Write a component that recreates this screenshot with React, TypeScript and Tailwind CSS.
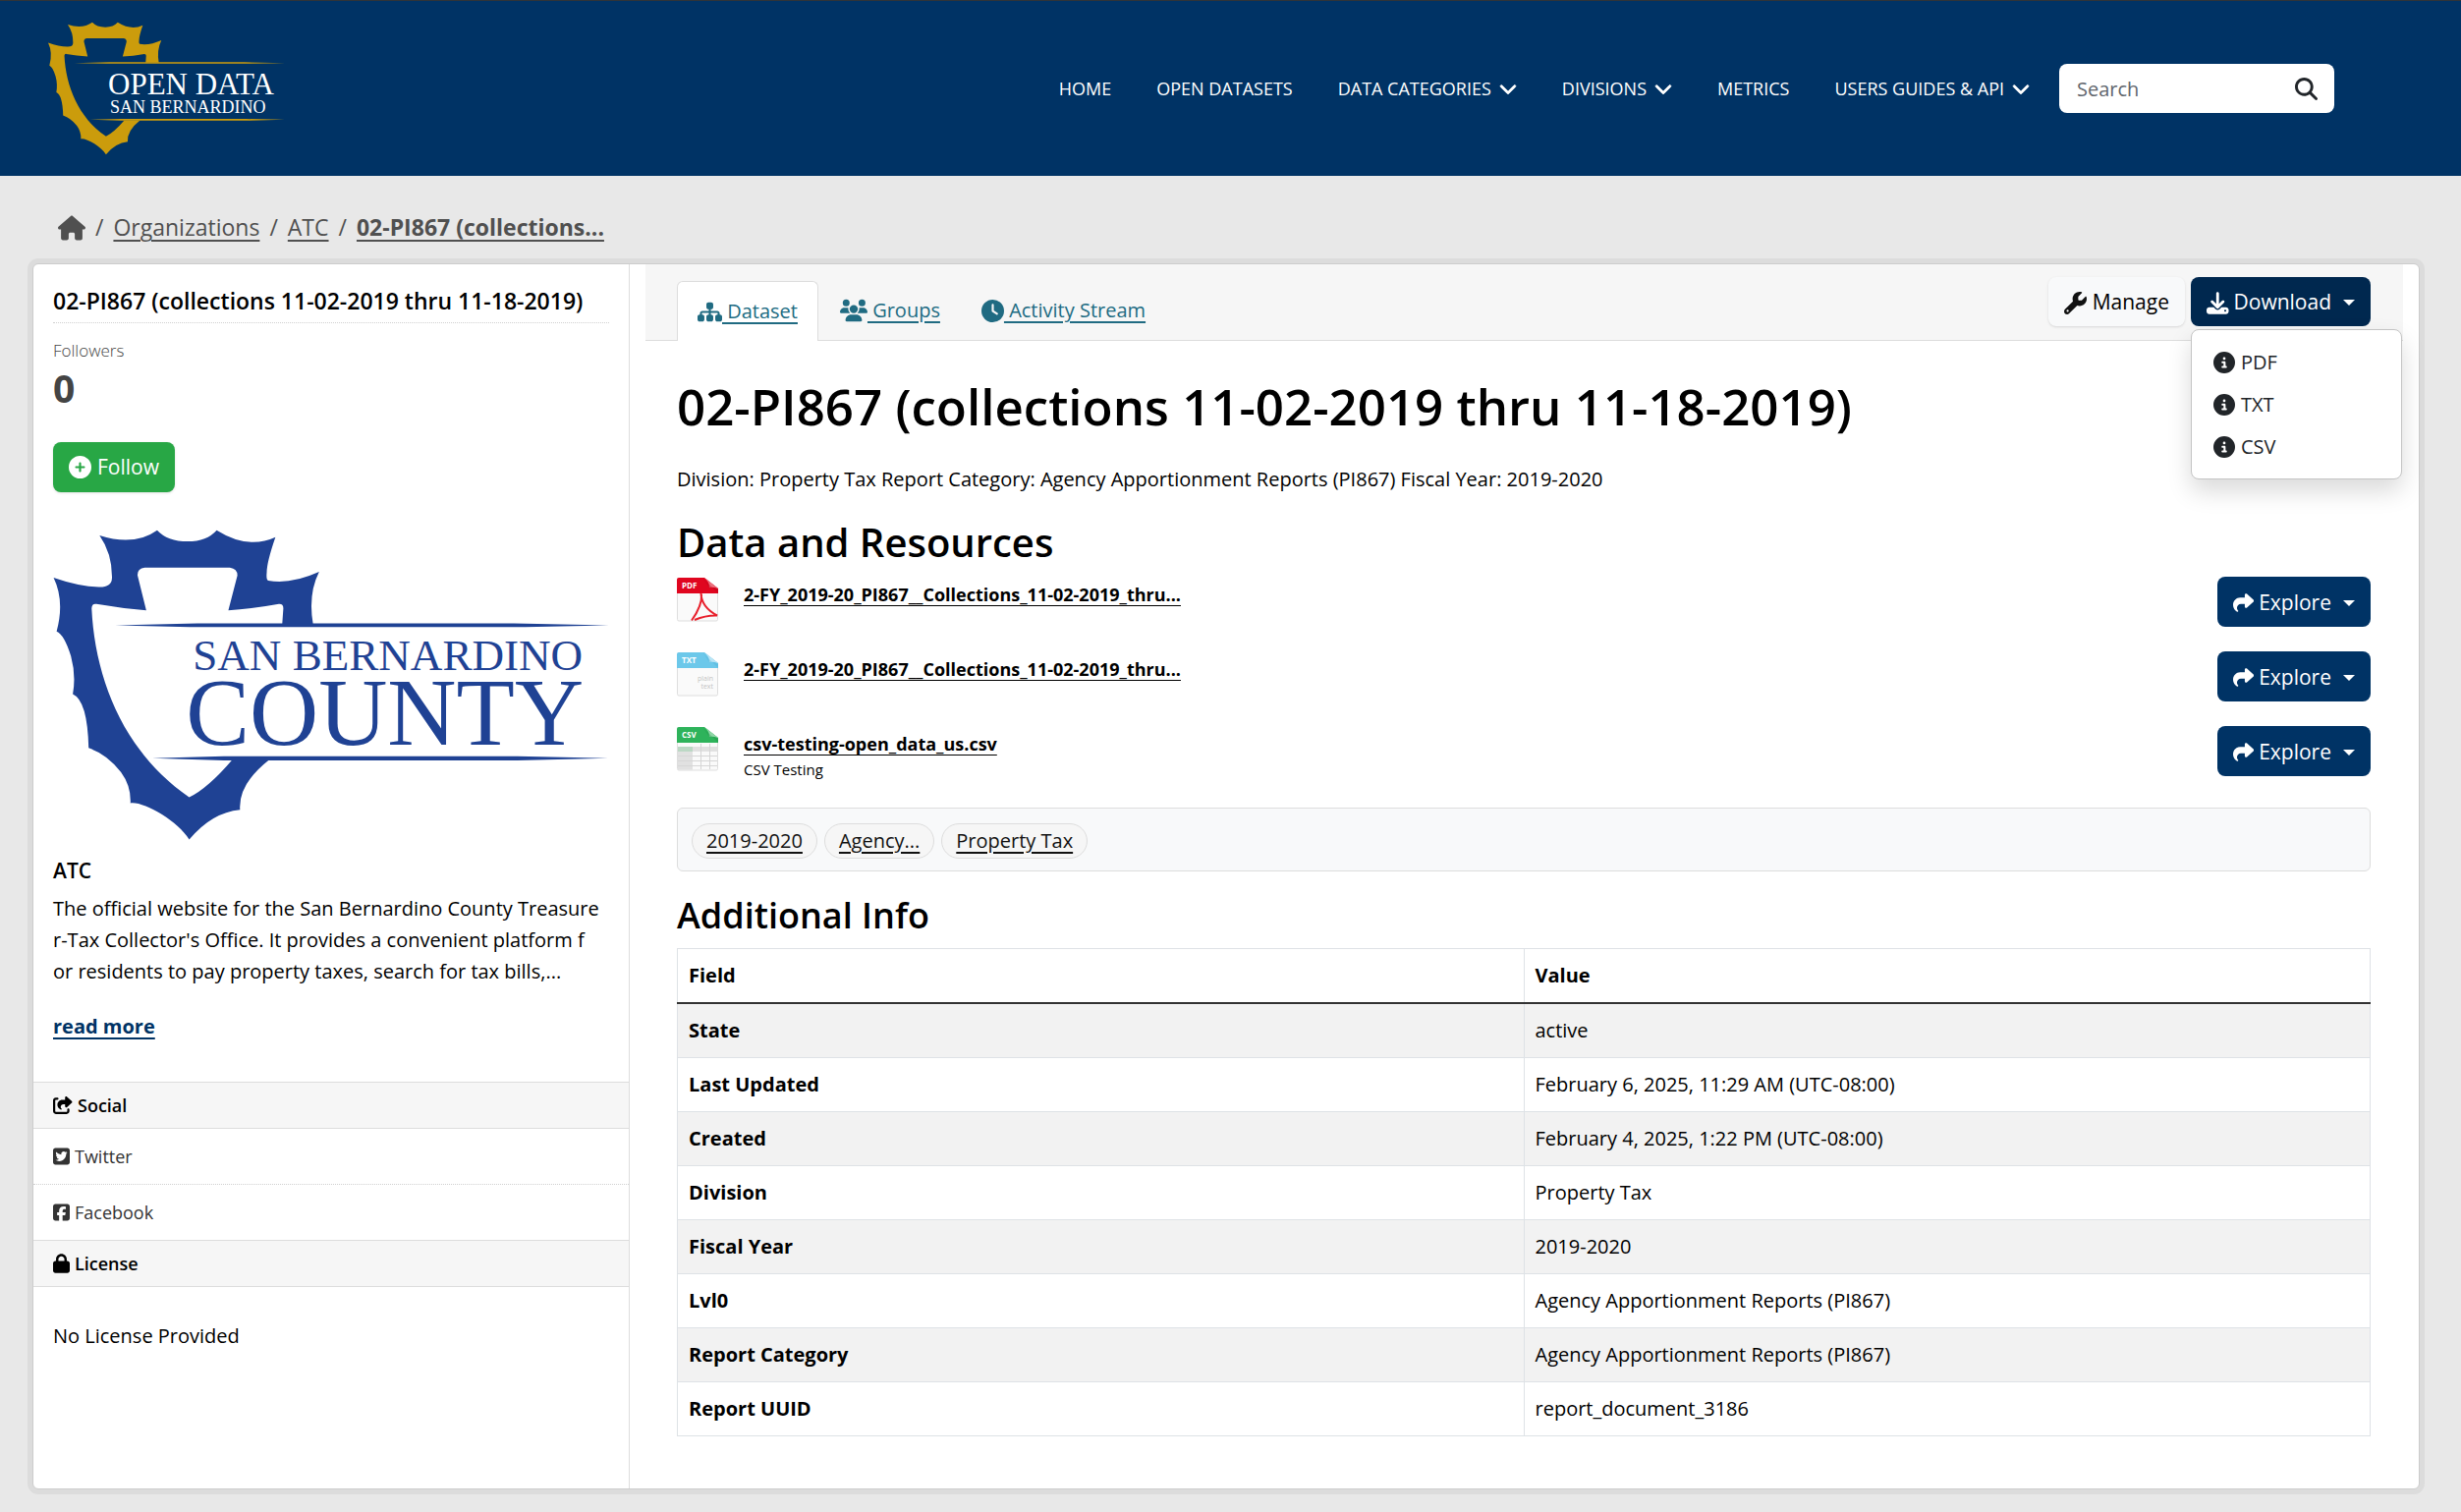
import React, { useState } from 'react';
import {
    FaChevronDown,
    FaCircleInfo,
    FaCirclePlus,
    FaClock,
    FaDownload,
    FaHouse,
    FaLock,
    FaMagnifyingGlass,
    FaShare,
    FaShareFromSquare,
    FaSitemap,
    FaSquareFacebook,
    FaSquareTwitter,
    FaUsers,
    FaWrench
} from 'react-icons/fa6';

const navItems = [
    { label: 'HOME', menu: false },
    { label: 'OPEN DATASETS', menu: false },
    { label: 'DATA CATEGORIES', menu: true },
    { label: 'DIVISIONS', menu: true },
    { label: 'METRICS', menu: false },
    { label: 'USERS GUIDES & API', menu: true }
];

type ResourceFormat = 'pdf' | 'txt' | 'csv';

interface Resource {
    name: string;
    format: ResourceFormat;
    description?: string;
}

const resources: Resource[] = [
    { name: '2-FY_2019-20_PI867__Collections_11-02-2019_thru...', format: 'pdf' },
    { name: '2-FY_2019-20_PI867__Collections_11-02-2019_thru...', format: 'txt' },
    { name: 'csv-testing-open_data_us.csv', format: 'csv', description: 'CSV Testing' }
];

const tags = ['2019-2020', 'Agency...', 'Property Tax'];

const additionalInfo = [
    ['State', 'active'],
    ['Last Updated', 'February 6, 2025, 11:29 AM (UTC-08:00)'],
    ['Created', 'February 4, 2025, 1:22 PM (UTC-08:00)'],
    ['Division', 'Property Tax'],
    ['Fiscal Year', '2019-2020'],
    ['Lvl0', 'Agency Apportionment Reports (PI867)'],
    ['Report Category', 'Agency Apportionment Reports (PI867)'],
    ['Report UUID', 'report_document_3186']
];

// Arrowhead outline and the two tapered rules, shared by both logos
function Arrowhead() {
    return (
        <>
            <path d="M727 349 Q713 258 743 189 Q668 228 608 216 Q602 214 604 190 Q604 160 627 83 Q555 122 471 62 Q445 96 394 96 Q340 96 313 62 Q252 112 160 78 Q194 134 193 208 Q192 236 158 235 Q105 234 38 207 Q68 278 46 371 Q66 380 84 446 Q98 505 89 562 Q128 582 131 726 Q180 745 217 800 Q244 842 242 894 C275 887 368 948 398 1005 Q458 922 533 914 Q528 836 610 762 L512 762 Q448 848 398 876 C225 740 148 515 139 300 Q140 284 152 287 Q215 300 284 306 L261 200 Q260 178 280 176 L506 176 Q526 179 526 200 L502 306 Q565 302 636 287 Q648 286 648 300 L645 349 Z" />
            <path d="M202 352 L420 346 H1260 L1512 352 L1290 357 H400 Z" />
            <path d="M300 757 L490 751 H1270 L1510 757 L1270 764 H490 Z" />
        </>
    );
}

function HeaderLogo() {
    return (
        <svg viewBox="0 0 244 136" className="h-[136px] w-[244px] shrink-0" role="img" aria-label="Open Data San Bernardino">
            <g fill="#cb9c0c" transform="translate(-6.2 -8) scale(.1635 .1425)">
                <Arrowhead />
            </g>
            <g fill="#ffffff" fontFamily="Liberation Serif, serif">
                <text x="61" y="74" fontSize="31">OPEN DATA</text>
                <text x="63" y="93" fontSize="18">SAN BERNARDINO</text>
            </g>
        </svg>
    );
}

function CountyLogo() {
    return (
        <svg viewBox="14 20 565 316" className="mt-[38px] w-full" role="img" aria-label="San Bernardino County">
            <g fill="#1f4294" transform="scale(.3827 .3333)">
                <Arrowhead />
            </g>
            <g fill="#1f4294" fontFamily="Liberation Serif, serif">
                <text x="156" y="163" fontSize="45">SAN BERNARDINO</text>
                <text x="149" y="239" fontSize="97">COUNTY</text>
            </g>
        </svg>
    );
}

const formatColors: Record<ResourceFormat, { band: string; fold: string; foldDark: string }> = {
    pdf: { band: '#e0061f', fold: '#ec6f7c', foldDark: '#b00418' },
    txt: { band: '#6cc8ea', fold: '#b9e5f6', foldDark: '#4aaed3' },
    csv: { band: '#2eb35b', fold: '#8ed6a6', foldDark: '#1f8f45' }
};

function FileIcon({ format }: { format: ResourceFormat }) {
    const colors = formatColors[format];
    return (
        <svg viewBox="0 0 42 45" className="mt-px h-[45px] w-[42px] shrink-0" aria-hidden="true">
            <path d="M.5 2 V42.500 Q.5 44 2 44 H40 Q41.500 44 41.500 42.500 V11 L28 .5 H2 Q.5 .5 .5 2 Z" fill="#fafafa" stroke="#dedede" />
            <path d="M0 16 V2 Q0 0 2 0 H28 L42 11 V16 Z" fill={colors.band} />
            <path d="M28 0 L42 11 Q36 9 33 10 Q33 4 28 0 Z" fill={colors.fold} />
            <path d="M27 1 L33 10 Q38 9 42 12 V16 Z" fill={colors.foldDark} opacity=".35" />
            <text x="5" y="11" fontSize="8" fontWeight="700" fill="#ffffff" fontFamily="Open Sans, sans-serif">
                {format.toUpperCase()}
            </text>
            {format === 'pdf' && (
                <path d="M24.500 16 Q25 30 41 38.500 Q30 38 18 43 M25 17 Q26 28 15 43.500" fill="none" stroke="#e8202c" strokeWidth="2" />
            )}
            {format === 'txt' && (
                <g fontSize="7" fill="#c4c4c4" textAnchor="end" fontFamily="Open Sans, sans-serif">
                    <text x="37" y="29">plain</text>
                    <text x="37" y="37">text</text>
                </g>
            )}
            {format === 'csv' && (
                <>
                    <path d="M1 20 H16 V43.500 H1 Z M16 20 H41 V25 H16 Z" fill="#e1e1e1" />
                    <path d="M1 20 H16 V25 H1 Z" fill="#bcd8c5" />
                    <path d="M1 29.500 H41 M1 34.500 H41 M1 39.500 H41 M24.500 17 V43 M33.500 17 V43" stroke="#d6d6d6" fill="none" />
                </>
            )}
        </svg>
    );
}

function Caret() {
    return <span className="ml-3 border-x-6 border-t-6 border-x-transparent border-t-white" />;
}

function SiteHeader() {
    return (
        <header className="flex items-center justify-between border-t border-[#303438] bg-[#003365] py-[21px] pr-[129px] pl-[49px]">
            <a href="#home"><HeaderLogo /></a>
            <div className="flex items-center">
                <nav className="flex items-center gap-[46px] text-lg text-white">
                    {navItems.map((item) => (
                        <a key={item.label} href="#nav" className="flex items-center gap-2 whitespace-nowrap">
                            {item.label}
                            {item.menu && <FaChevronDown className="size-[18px] stroke-white stroke-[24px]" />}
                        </a>
                    ))}
                </nav>
                <form className="ml-[30px] flex h-[50px] w-[280px] items-center rounded-lg bg-white pr-[17px] pl-[18px]" onSubmit={(e) => e.preventDefault()}>
                    <input type="text" aria-label="Search" placeholder="Search" className="min-w-0 flex-1 pt-[2px] text-xl outline-none placeholder:text-[#5f666d]" />
                    <button type="submit" aria-label="Submit search">
                        <FaMagnifyingGlass className="size-[23px] text-[#212529]" />
                    </button>
                </form>
            </div>
        </header>
    );
}

function Breadcrumb() {
    return (
        <nav aria-label="Breadcrumb" className="flex h-[89px] items-center gap-[10px] pt-4 pl-[26px] text-[23px] text-[#505050]">
            <a href="#home" aria-label="Home"><FaHouse className="size-7" /></a>
            <span>/</span>
            <a href="#organizations" className="underline decoration-2 underline-offset-4">Organizations</a>
            <span>/</span>
            <a href="#atc" className="underline decoration-2 underline-offset-4">ATC</a>
            <span>/</span>
            <a href="#dataset" className="font-bold underline decoration-2 underline-offset-4">02-PI867 (collections...</a>
        </nav>
    );
}

function Sidebar() {
    const bandClass = 'flex h-12 items-center gap-[5px] border-y border-[#dddddd] bg-[#f6f6f6] px-5 text-lg font-semibold';

    return (
        <aside className="w-1/4 shrink-0 border-r border-[#dddddd]">
            <div className="px-5 pt-[19px]">
                <h2 className="border-b border-dotted border-[#d0d0d0] pb-1 text-[23px] leading-9 font-semibold whitespace-nowrap">
                    02-PI867 (collections 11-02-2019 thru 11-18-2019)
                </h2>
                <dl>
                    <dt className="mt-[15px] text-[17px] leading-[26px] font-light text-[#444444]">Followers</dt>
                    <dd className="text-[39px] leading-[50px] font-bold text-[#444444]">0</dd>
                </dl>
                <button type="button" className="mt-[30px] flex h-[51px] items-center gap-[6px] rounded-lg bg-[#28a745] px-4 text-[21px] text-white shadow-sm">
                    <FaCirclePlus className="size-[23px]" />
                    Follow
                </button>
                <CountyLogo />
                <h3 className="mt-[14px] text-[21px] leading-8 font-semibold">ATC</h3>
                <p className="mt-[7px] text-xl leading-8 whitespace-nowrap">
                    The official website for the San Bernardino County Treasure
                    <br />
                    r-Tax Collector's Office. It provides a convenient platform f
                    <br />
                    or residents to pay property taxes, search for tax bills,...
                </p>
                <p className="mt-6 mb-10 text-xl leading-8">
                    <a href="#about" className="font-bold text-[#003365] underline decoration-2 underline-offset-4">read more</a>
                </p>
            </div>

            <h2 className={bandClass}>
                <FaShareFromSquare className="size-5" />
                Social
            </h2>
            <ul className="text-lg text-[#333333]">
                <li className="border-b border-dotted border-[#d0d0d0]">
                    <a href="#twitter" className="flex h-14 items-center gap-[5px] px-5">
                        <FaSquareTwitter className="h-5 w-[17px]" />
                        Twitter
                    </a>
                </li>
                <li>
                    <a href="#facebook" className="flex h-14 items-center gap-[5px] px-5">
                        <FaSquareFacebook className="h-5 w-[17px]" />
                        Facebook
                    </a>
                </li>
            </ul>
            <h2 className={bandClass}>
                <FaLock className="h-5 w-[17px]" />
                License
            </h2>
            <p className="px-5 pt-[34px] text-xl leading-8">No License Provided</p>
        </aside>
    );
}

function PageTabs() {
    const [open, setOpen] = useState(true);
    const tabClass = 'flex items-center rounded-t-md px-5';

    return (
        <div className="flex items-start justify-between border-b border-[#dddddd] bg-[#f6f6f6] pr-[33px] pl-8">
            <nav className="flex h-[77px] gap-[2px] pt-[17px] text-xl text-[#206b82]">
                <a href="#dataset" className="-mb-px flex items-center rounded-t-md border border-b-0 border-[#dddddd] bg-white px-5">
                    <FaSitemap className="size-[25px]" />
                    <span className="underline decoration-2 underline-offset-4">&nbsp;Dataset</span>
                </a>
                <a href="#groups" className={tabClass}>
                    <FaUsers className="h-6 w-7" />
                    <span className="underline decoration-2 underline-offset-4">&nbsp;Groups</span>
                </a>
                <a href="#activity" className={tabClass}>
                    <FaClock className="size-[23px]" />
                    <span className="underline decoration-2 underline-offset-4">&nbsp;Activity Stream</span>
                </a>
            </nav>
            <div className="flex gap-[6px] pt-[13px] text-[21px]">
                <button type="button" className="flex h-[50px] items-center gap-[6px] rounded-lg bg-[#f8f9fa] px-4 pt-[2px] shadow-sm">
                    <FaWrench className="size-[23px] text-[#111111]" />
                    Manage
                </button>
                <div className="relative">
                    <button
                        type="button"
                        aria-expanded={open}
                        onClick={() => setOpen(!open)}
                        className="flex h-[50px] w-[183px] items-center rounded-lg bg-[#00284f] px-4 pt-[2px] text-white"
                    >
                        <FaDownload className="mr-[5px] size-[23px]" />
                        Download
                        <Caret />
                    </button>
                    {open && (
                        <ul className="absolute top-[53px] left-0 w-[215px] rounded-lg border border-[#c4c4c4] bg-white py-[11px] text-xl text-[#212529] shadow-[0_12px_24px_rgba(0,0,0,0.15)]">
                            {['PDF', 'TXT', 'CSV'].map((format) => (
                                <li key={format}>
                                    <a href="#download" className="flex h-[43px] items-center gap-[6px] px-[22px]">
                                        <FaCircleInfo className="size-[22px]" />
                                        {format}
                                    </a>
                                </li>
                            ))}
                        </ul>
                    )}
                </div>
            </div>
        </div>
    );
}

function ResourceRow({ resource }: { resource: Resource }) {
    return (
        <li className="flex h-[76px] items-start">
            <FileIcon format={resource.format} />
            <div className="ml-[26px] flex-1 pt-[6px]">
                <a href="#resource" className="block text-lg leading-6 font-bold underline underline-offset-4">{resource.name}</a>
                {resource.description && <p className="mt-[2px] text-[15px] leading-6">{resource.description}</p>}
            </div>
            <button type="button" className="flex h-[51px] w-[156px] items-center rounded-lg bg-[#003365] px-4 pt-[2px] text-[21px] text-white">
                <FaShare className="mr-[5px] size-[23px]" />
                Explore
                <Caret />
            </button>
        </li>
    );
}

export default function App() {
    return (
        <div className="min-h-screen bg-[#e8e8e8] pb-6 font-['Open_Sans',sans-serif] text-black">
            <SiteHeader />
            <div className="pr-[42px] pl-[33px]">
                <Breadcrumb />
                <div className="flex min-h-[1248px] rounded-md border border-[#cccccc] bg-white shadow-[0_0_0_5px_rgba(0,0,0,0.05)]">
                    <Sidebar />
                    <main className="min-w-0 flex-1 px-4">
                        <PageTabs />
                        <div className="pr-[33px] pl-8">
                            <h1 className="mt-8 text-[51px] leading-[68px] font-semibold">
                                02-PI867 (collections 11-02-2019 thru 11-18-2019)
                            </h1>
                            <p className="mt-[25px] text-xl leading-8">
                                Division: Property Tax Report Category: Agency Apportionment Reports (PI867) Fiscal Year: 2019-2020
                            </p>

                            <section>
                                <h2 className="mt-[23px] mb-[10px] text-[40px] leading-[50px] font-semibold">Data and Resources</h2>
                                <ul>
                                    {resources.map((resource) => (
                                        <ResourceRow key={resource.format} resource={resource} />
                                    ))}
                                </ul>
                            </section>

                            <ul className="mt-[7px] flex h-[65px] items-center gap-[7px] rounded-md border border-[#dddddd] bg-[#f8f9fa] px-[14px] pt-[2px]">
                                {tags.map((tag) => (
                                    <li key={tag}>
                                        <a href="#tag" className="flex h-9 items-center rounded-full border border-[#dddddd] bg-[#f6f6f6] px-[14px] text-xl text-[#111111] underline decoration-2 underline-offset-4">
                                            {tag}
                                        </a>
                                    </li>
                                ))}
                            </ul>

                            <section>
                                <h2 className="mt-[23px] mb-[11px] text-4xl leading-[44px] font-semibold">Additional Info</h2>
                                <table className="w-full table-fixed border-collapse text-left text-xl leading-[30px]">
                                    <thead>
                                        <tr className="border-b-2 border-[#333333]">
                                            <th className="border-x border-t border-x-[#dee2e6] border-t-[#dee2e6] px-[11px] py-3">Field</th>
                                            <th className="border-x border-t border-x-[#dee2e6] border-t-[#dee2e6] px-[11px] py-3">Value</th>
                                        </tr>
                                    </thead>
                                    <tbody>
                                        {additionalInfo.map(([field, value]) => (
                                            <tr key={field} className="odd:bg-[#f2f2f2]">
                                                <th scope="row" className="border-x border-b border-[#dee2e6] px-[11px] py-3">{field}</th>
                                                <td className="border-x border-b border-[#dee2e6] px-[11px] py-3">{value}</td>
                                            </tr>
                                        ))}
                                    </tbody>
                                </table>
                            </section>
                        </div>
                    </main>
                </div>
            </div>
        </div>
    );
}
